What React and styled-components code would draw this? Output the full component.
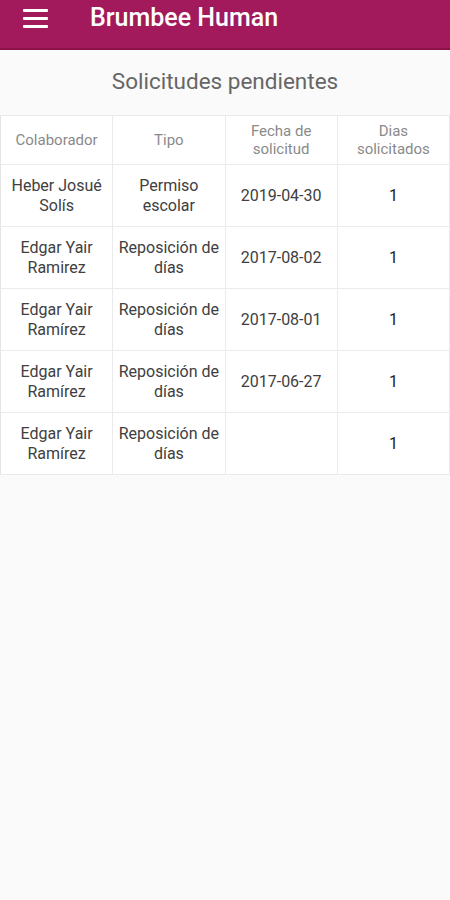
import React from 'react'
import styled, {createGlobalStyle} from 'styled-components'

const GlobalStyle = createGlobalStyle`
    html, body {
        margin: 0;
        padding: 0;
        background: #fafafa;
        font-family: Roboto, 'Noto Sans', sans-serif;
    }
`

const Page = styled.div`
    width: 450px;
    min-height: 900px;
    background: #fafafa;
`

const AppBar = styled.header`
    display: flex;
    align-items: flex-start;
    height: 50px;
    padding: 3px 0 0 23px;
    box-sizing: border-box;
    background: #a21a5b;
    border-bottom: 2px solid #8c1049;
    color: #fff;
`

const MenuButton = styled.div`
    display: flex;
    flex-direction: column;
    gap: 5px;
    width: 25px;
    margin-top: 6px;

    span {
        display: block;
        height: 3px;
        background: #fff;
        border-radius: 1px;
    }
`

const AppTitle = styled.h1`
    margin: 0 0 0 42px;
    font-size: 25px;
    font-weight: 500;
    line-height: 30px;
`

const Heading = styled.h2`
    margin: 0;
    padding: 18px 0 0;
    height: 65px;
    box-sizing: border-box;
    text-align: center;
    font-size: 22.5px;
    font-weight: 400;
    color: #666;
`

const Table = styled.table`
    width: 450px;
    border-collapse: collapse;
    table-layout: fixed;
    background: #fff;
`

const Cell = styled.td`
    border: 1px solid #ebebeb;
    text-align: center;
    vertical-align: middle;
    padding: 0 ${p => (p.$head ? '10px' : '4px')};
    height: ${p => (p.$head ? '48px' : '61px')};
    font-size: ${p => (p.$head ? '15px' : '16px')};
    font-weight: 400;
    line-height: ${p => (p.$head ? '18px' : '20px')};
    color: ${p => (p.$head ? '#8a8a8a' : p.$strong ? '#222' : '#404040')};

    &:first-child { border-left-color: #e4e4e4; }
`

const rows = [
    {name: 'Heber Josué Solís', type: 'Permiso escolar', date: '2019-04-30', days: 1},
    {name: 'Edgar Yair Ramirez', type: 'Reposición de días', date: '2017-08-02', days: 1},
    {name: 'Edgar Yair Ramírez', type: 'Reposición de días', date: '2017-08-01', days: 1},
    {name: 'Edgar Yair Ramírez', type: 'Reposición de días', date: '2017-06-27', days: 1},
    {name: 'Edgar Yair Ramírez', type: 'Reposición de días', date: '', days: 1},
]

export default function App() {
    return (
        <>
            <GlobalStyle/>
            <Page>
                <AppBar>
                    <MenuButton aria-label='Menu'>
                        <span/><span/><span/>
                    </MenuButton>
                    <AppTitle>Brumbee Human</AppTitle>
                </AppBar>

                <Heading>Solicitudes pendientes</Heading>

                <Table>
                    <thead>
                        <tr>
                            <Cell as='th' $head>Colaborador</Cell>
                            <Cell as='th' $head>Tipo</Cell>
                            <Cell as='th' $head>Fecha de solicitud</Cell>
                            <Cell as='th' $head>Dias solicitados</Cell>
                        </tr>
                    </thead>
                    <tbody>
                        {rows.map((r, i) => (
                            <tr key={i}>
                                <Cell>{r.name}</Cell>
                                <Cell>{r.type}</Cell>
                                <Cell>{r.date}</Cell>
                                <Cell $strong>{r.days}</Cell>
                            </tr>
                        ))}
                    </tbody>
                </Table>
            </Page>
        </>
    )
}
